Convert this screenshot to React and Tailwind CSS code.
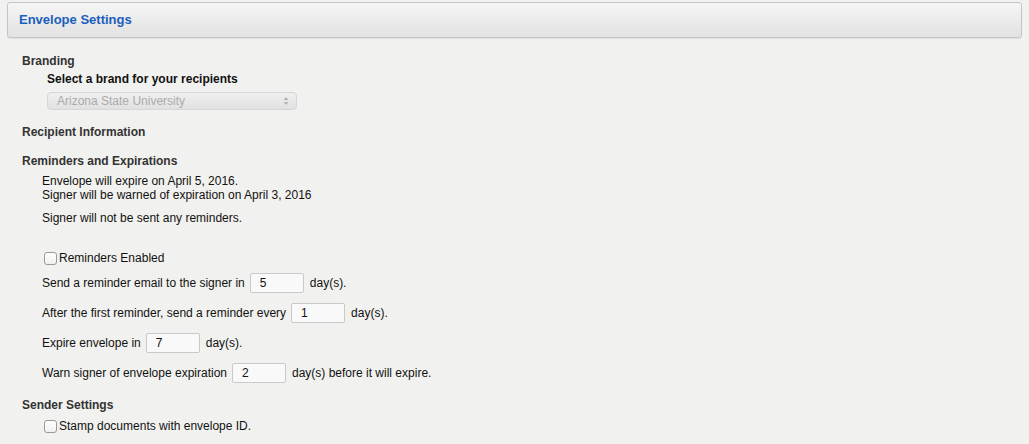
import React from 'react';

const font = { fontFamily: '"Liberation Sans", Arial, sans-serif' };

const Checkbox = ({ label }) => (
  <label className="flex items-center h-4 ml-[44px] text-[12px] text-[#111]">
    <span className="w-[13px] h-[13px] rounded-[3px] border border-[#9a9a9a] bg-gradient-to-b from-white to-[#f1f1f1] mr-[2px]" />
    {label}
  </label>
);

const DayRow = ({ before, value, after, className = '' }) => (
  <div className={`flex items-center h-5 ml-[42px] text-[12px] text-[#111] ${className}`}>
    <span>{before}</span>
    <input
      readOnly
      value={value}
      className="ml-[5px] mr-[6px] w-[54px] h-5 px-[9px] border border-[#c9c9c9] rounded-[2px] bg-[#f9f9f9] text-[12px] text-[#111] outline-none"
    />
    <span>{after}</span>
  </div>
);

export default function App() {
  return (
    <div className="min-h-[444px] w-full bg-[#f1f1ef] pt-[2px] pb-4 leading-4" style={font}>
      {/* Header */}
      <div className="mx-[7px] h-[36px] flex items-center pl-[11px] border border-[#c6c6c6] rounded-[3px] bg-gradient-to-b from-[#f5f5f5] to-[#e2e2e2] shadow-[0_1px_1px_rgba(0,0,0,0.08)]">
        <h2 className="text-[13px] font-bold text-[#1b5ebd] -mt-[1px]">Envelope Settings</h2>
      </div>

      {/* Branding */}
      <div className="ml-[22px] mt-[15px] text-[12px] font-bold text-[#333]">Branding</div>
      <div className="ml-[47px] mt-[2px] text-[12px] font-bold text-[#111]">Select a brand for your recipients</div>
      <div className="ml-[47px] mt-[5px] w-[250px] h-[18px] flex items-center justify-between px-[9px] rounded-[4px] border border-[#d6d6d6] bg-gradient-to-b from-[#f0f0f0] to-[#e1e1e1] text-[12px] text-[#ababab]">
        <span>Arizona State University</span>
        <svg width="6" height="10" viewBox="0 0 6 10" className="mr-[-2px]">
          <path d="M3 1 L5.5 4 H0.5 Z" fill="#b5b5b5" />
          <path d="M3 9 L5.5 6 H0.5 Z" fill="#b5b5b5" />
        </svg>
      </div>

      {/* Recipient info */}
      <div className="ml-[22px] mt-[14px] text-[12px] font-bold text-[#333]">Recipient Information</div>

      {/* Reminders */}
      <div className="ml-[22px] mt-[13px] text-[12px] font-bold text-[#333]">Reminders and Expirations</div>
      <div className="ml-[42px] mt-[5px] text-[12px] leading-[14px] text-[#111]">
        <div>Envelope will expire on April 5, 2016.</div>
        <div>Signer will be warned of expiration on April 3, 2016</div>
      </div>
      <div className="ml-[42px] mt-[9px] text-[12px] leading-[14px] text-[#111]">Signer will not be sent any reminders.</div>

      <div className="mt-[25px]">
        <Checkbox label="Reminders Enabled" />
      </div>

      <DayRow className="mt-[7px]" before="Send a reminder email to the signer in" value="5" after="day(s)." />
      <DayRow className="mt-[10px]" before="After the first reminder, send a reminder every" value="1" after="day(s)." />
      <DayRow className="mt-[10px]" before="Expire envelope in" value="7" after="day(s)." />
      <DayRow className="mt-[10px]" before="Warn signer of envelope expiration" value="2" after="day(s) before it will expire." />

      {/* Sender settings */}
      <div className="ml-[22px] mt-[14px] text-[12px] font-bold text-[#333]">Sender Settings</div>
      <div className="mt-[5px]">
        <Checkbox label="Stamp documents with envelope ID." />
      </div>
    </div>
  );
}
